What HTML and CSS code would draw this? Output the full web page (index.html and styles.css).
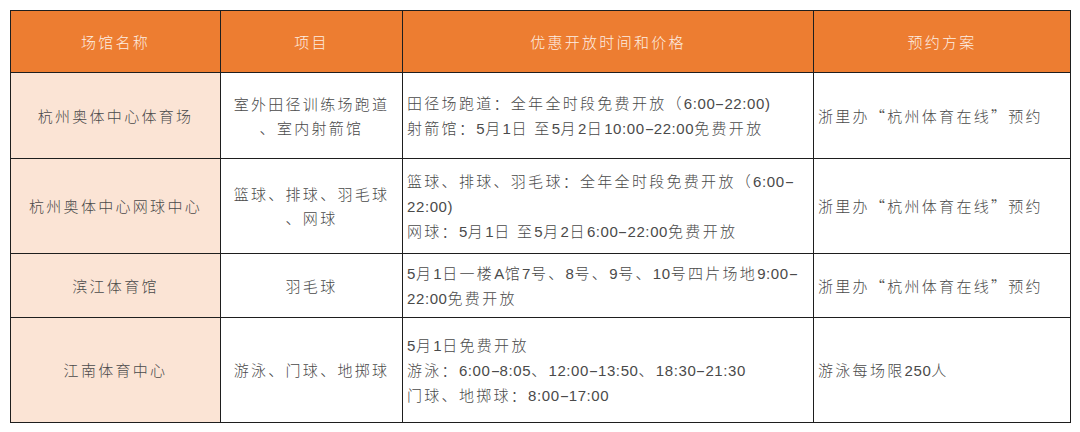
FILE: index.html
```html
<!DOCTYPE html>
<html lang="zh-CN">
<head>
<meta charset="utf-8">
<link rel="stylesheet" href="styles.css">
</head>
<body>
<table class="grid">
  <colgroup>
    <col class="c1"><col class="c2"><col class="c3"><col class="c4">
  </colgroup>
  <thead>
    <tr class="head">
      <th>场馆名称</th>
      <th>项目</th>
      <th>优惠开放时间和价格</th>
      <th>预约方案</th>
    </tr>
  </thead>
  <tbody>
    <tr class="r1">
      <td class="name">杭州奥体中心体育场</td>
      <td class="item">室外田径训练场跑道<br>、室内射箭馆</td>
      <td class="time">田径场跑道：全年全时段免费开放（<span class="n">6:00<span class="d">-</span>22:00)</span><br>射箭馆：<span class="n">5</span>月<span class="n">1</span>日 至<span class="n">5</span>月<span class="n">2</span>日<span class="n">10:00<span class="d">-</span>22:00</span>免费开放</td>
      <td class="plan">浙里办“杭州体育在线”预约</td>
    </tr>
    <tr class="r2">
      <td class="name">杭州奥体中心网球中心</td>
      <td class="item">篮球、排球、羽毛球<br>、网球</td>
      <td class="time">篮球、排球、羽毛球：全年全时段免费开放（<span class="n">6:00<span class="d">-</span></span><br><span class="n">22:00)</span><br>网球：<span class="n">5</span>月<span class="n">1</span>日 至<span class="n">5</span>月<span class="n">2</span>日<span class="n">6:00<span class="d">-</span>22:00</span>免费开放</td>
      <td class="plan">浙里办“杭州体育在线”预约</td>
    </tr>
    <tr class="r3">
      <td class="name">滨江体育馆</td>
      <td class="item">羽毛球</td>
      <td class="time"><span class="n">5</span>月<span class="n">1</span>日一楼<span class="n">A</span>馆<span class="n">7</span>号、<span class="n">8</span>号、<span class="n">9</span>号、<span class="n">10</span>号四片场地<span class="n">9:00<span class="d">-</span></span><br><span class="n">22:00</span>免费开放</td>
      <td class="plan">浙里办“杭州体育在线”预约</td>
    </tr>
    <tr class="r4">
      <td class="name">江南体育中心</td>
      <td class="item">游泳、门球、地掷球</td>
      <td class="time"><span class="n">5</span>月<span class="n">1</span>日免费开放<br>游泳：<span class="n">6:00<span class="d">-</span>8:05</span>、<span class="n">12:00<span class="d">-</span>13:50</span>、<span class="n">18:30<span class="d">-</span>21:30</span><br>门球、地掷球：<span class="n">8:00<span class="d">-</span>17:00</span></td>
      <td class="plan">游泳每场限<span class="n">250</span>人</td>
    </tr>
  </tbody>
</table>
</body>
</html>
```

FILE: styles.css
```css
html, body {
  margin: 0;
  padding: 0;
  background: #ffffff;
}

body {
  padding: 10px 0 0 10px;
}

.grid {
  border-collapse: collapse;
  table-layout: fixed;
  width: 1060px;
  font-family: "Noto Sans CJK SC", "Liberation Sans", sans-serif;
  font-size: 15px;
  font-weight: 300;
  color: #4a4a4a;
  letter-spacing: 2.3px;
}

.c1 { width: 210px; }
.c2 { width: 182px; }
.c3 { width: 411px; }
.c4 { width: 257px; }

.grid th,
.grid td {
  border: 1px solid #1e1e1e;
  padding: 0 4px;
  line-height: 24px;
  vertical-align: middle;
  font-weight: 300;
}

.head th {
  height: 61px;
  background: #ed7d31;
  color: #fdeee3;
  text-align: center;
}

.r1 td { height: 85px; }
.r2 td { height: 94px; }
.r3 td { height: 63px; }
.r4 td { height: 104px; }

.name {
  background: #fbe4d5;
  text-align: center;
}

.item {
  text-align: center;
}

.time,
.plan {
  text-align: left;
  white-space: nowrap;
}

.n {
  font-family: "Liberation Sans", sans-serif;
  letter-spacing: 0.6px;
}

.d {
  display: inline-block;
  margin: 0 2px;
  letter-spacing: 0;
  transform: scaleX(1.9);
}
```
